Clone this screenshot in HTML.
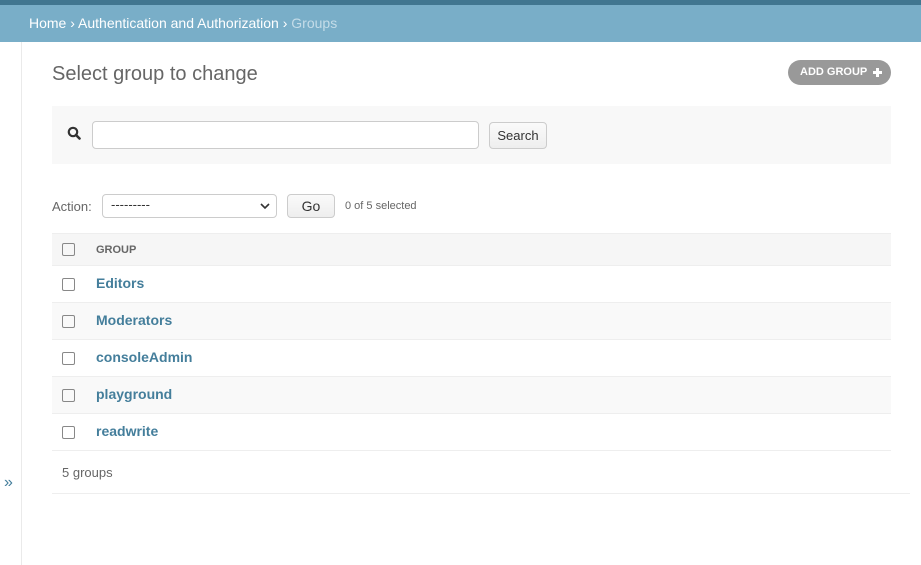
<!DOCTYPE html>
<html><head><style>
body{margin:0;width:921px;height:565px;font-family:"Liberation Sans",sans-serif;background:#fff;position:relative;overflow:hidden;color:#333}
.top{position:absolute;left:0;top:0;width:921px;height:5px;background:#417690}
.bc{position:absolute;left:0;top:5px;width:921px;height:37px;background:#79aec8;color:#fff;font-size:14px;line-height:36px;padding-left:29px;box-sizing:border-box}
.bc .g{color:#c4dce8}
.side{position:absolute;left:21px;top:42px;width:1px;height:523px;background:#eaeaea}
.tog{position:absolute;left:4px;top:474px;color:#447e9b;font-size:16px}
h1{position:absolute;left:52px;top:63px;margin:0;font-weight:300;font-size:20px;color:#666}
.add{position:absolute;left:788px;top:60px;width:103px;height:25px;border-radius:13px;background:#999;color:#fff;font-size:11px;font-weight:bold;line-height:25px;padding-left:12px;box-sizing:border-box;white-space:nowrap}
.add svg{position:absolute;left:84px;top:7px}
.srch{position:absolute;left:52px;top:106px;width:839px;height:58px;background:#f8f8f8}
.inp{position:absolute;left:40px;top:15px;width:385px;height:26px;border:1px solid #ccc;border-radius:4px;background:#fff}
.btn{position:absolute;border:1px solid #ccc;border-radius:4px;background:linear-gradient(#fafafa,#eee);font-size:13px;color:#333;text-align:center;box-sizing:border-box}
.sel{position:absolute;left:102px;top:194px;width:175px;height:24px;border:1px solid #ccc;border-radius:4px;box-sizing:border-box;font-size:13px;padding-left:8px;line-height:20px}
.sel svg{position:absolute;right:6px;top:8px}
table{position:absolute;left:52px;top:233px;width:839px;border-collapse:collapse}
td,th{height:36px;border-bottom:1px solid #eee;padding:0;text-align:left}
th{background:#f6f6f6;border-top:1px solid #eee;font-size:11px;color:#666;height:31px}
tr:nth-child(odd) td{background:#f9f9f9}
tr.h td{background:#fff}
.cb{width:11px;height:11px;border:1.5px solid #888;border-radius:2px;margin-left:10px}
a{color:#447e9b;font-weight:bold;font-size:14px;text-decoration:none}
</style></head><body>
<div class="top"></div>
<div class="bc">Home › Authentication and Authorization › <span class="g">Groups</span></div>
<div class="side"></div>
<div class="tog">»</div>
<h1>Select group to change</h1>
<div class="add">ADD GROUP<svg width="11" height="11" viewBox="0 0 11 11"><path d="M5.5 1v9M1 5.5h9" stroke="#fff" stroke-width="3"/></svg></div>
<div class="srch">
<svg style="position:absolute;left:15px;top:20px" width="14" height="14" viewBox="0 0 14 14"><circle cx="6" cy="6" r="4.2" stroke="#333" stroke-width="2.2" fill="none"/><line x1="9" y1="9" x2="12.5" y2="12.5" stroke="#333" stroke-width="2.6" stroke-linecap="round"/></svg>
<div class="inp"></div>
<div class="btn" style="left:437px;top:16px;width:58px;height:27px;line-height:25px">Search</div>
</div>
<div style="position:absolute;left:52px;top:199px;font-size:13px;color:#666">Action:</div>
<div class="sel">---------<svg width="10" height="7" viewBox="0 0 10 7"><path d="M1 1l4 4 4-4" stroke="#333" stroke-width="1.6" fill="none"/></svg></div>
<div class="btn" style="left:287px;top:194px;width:48px;height:24px;line-height:22px;font-size:14px">Go</div>
<div style="position:absolute;left:345px;top:200px;font-size:11px;color:#666">0 of 5 selected</div>
<table>
<tr><th style="width:44px"><div class="cb"></div></th><th>GROUP</th></tr>
<tr class="h"><td><div class="cb"></div></td><td><a>Editors</a></td></tr>
<tr><td><div class="cb"></div></td><td><a>Moderators</a></td></tr>
<tr class="h"><td><div class="cb"></div></td><td><a>consoleAdmin</a></td></tr>
<tr><td><div class="cb"></div></td><td><a>playground</a></td></tr>
<tr class="h"><td><div class="cb"></div></td><td><a>readwrite</a></td></tr>
</table>
<div style="position:absolute;left:62px;top:465px;font-size:13px;color:#666">5 groups</div>
<div style="position:absolute;left:52px;top:493px;width:858px;height:1px;background:#eee"></div>
</body></html>
